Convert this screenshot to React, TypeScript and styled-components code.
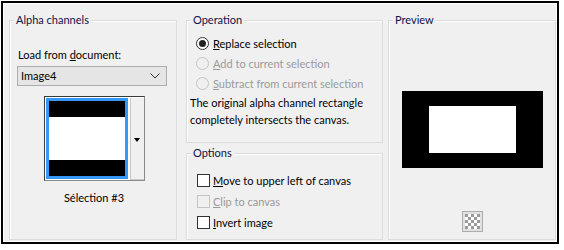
import React from "react"
import styled, { createGlobalStyle } from "styled-components"

const GlobalStyle = createGlobalStyle`
  body {
    margin: 0;
    background: #ffffff;
    font-family: Lato, "Liberation Sans", sans-serif;
    font-size: 11px;
    color: #000000;
  }
`

const Key = styled.span`
  text-decoration: underline;
  text-underline-offset: 1px;
`

// Groupbox with a title sitting on its top border
const GroupBox: React.FC<{ title: string; children?: React.ReactNode; className?: string }> = ({
  title,
  children,
  className,
}) => (
  <Group className={className}>
    <GroupTitle>{title}</GroupTitle>
    {children}
  </Group>
)

const RadioRow: React.FC<{ checked?: boolean; disabled?: boolean; children: React.ReactNode }> = ({
  checked,
  disabled,
  children,
}) => (
  <OptionRow $disabled={disabled} $height={20}>
    <Radio $disabled={disabled}>{checked && <RadioDot />}</Radio>
    <span>{children}</span>
  </OptionRow>
)

const CheckRow: React.FC<{ disabled?: boolean; children: React.ReactNode }> = ({ disabled, children }) => (
  <OptionRow $disabled={disabled} $height={21}>
    <CheckBox $disabled={disabled} />
    <span>{children}</span>
  </OptionRow>
)

export default function App() {
  return (
    <>
      <GlobalStyle />
      <Frame>
        <Panel>
          <LeftGroup title="Alpha channels">
            <LeftBody>
              <FieldLabel>
                Load from <Key>d</Key>ocument:
              </FieldLabel>
              <Combo>
                <span>Image4</span>
                <svg width="10" height="6" viewBox="0 0 10 6">
                  <polyline points="0.5,0.5 5,5 9.5,0.5" fill="none" stroke="#333" strokeWidth="1" />
                </svg>
              </Combo>
              <Thumb>
                <ThumbImage>
                  <Band $dark />
                  <Band />
                  <Band $dark />
                </ThumbImage>
                <ThumbButton>
                  <Triangle />
                </ThumbButton>
              </Thumb>
              <Caption>Sélection #3</Caption>
            </LeftBody>
          </LeftGroup>

          <MiddleColumn>
            <OperationGroup title="Operation">
              <OperationBody>
                <RadioRow checked>
                  <Key>R</Key>eplace selection
                </RadioRow>
                <RadioRow disabled>
                  <Key>A</Key>dd to current selection
                </RadioRow>
                <RadioRow disabled>
                  <Key>S</Key>ubtract from current selection
                </RadioRow>
                <Description>
                  The original alpha channel rectangle
                  <br />
                  completely intersects the canvas.
                </Description>
              </OperationBody>
            </OperationGroup>
            <OptionsGroup title="Options">
              <OptionsBody>
                <CheckRow>
                  <Key>M</Key>ove to upper left of canvas
                </CheckRow>
                <CheckRow disabled>
                  <Key>C</Key>lip to canvas
                </CheckRow>
                <CheckRow>
                  <Key>I</Key>nvert image
                </CheckRow>
              </OptionsBody>
            </OptionsGroup>
          </MiddleColumn>

          <PreviewGroup title="Preview">
            <PreviewBody>
              <PreviewCanvas>
                <PreviewHole />
              </PreviewCanvas>
              <CheckerButton>
                <svg width="15" height="15" viewBox="0 0 15 15">
                  <rect width="15" height="15" fill="#ffffff" />
                  {[0, 1, 2, 3, 4].map((r) =>
                    [0, 1, 2, 3, 4].map((c) =>
                      (r + c) % 2 === 0 ? (
                        <rect key={`${r}-${c}`} x={c * 3} y={r * 3} width="3" height="3" fill="#9a9a9a" />
                      ) : null
                    )
                  )}
                </svg>
              </CheckerButton>
            </PreviewBody>
          </PreviewGroup>
        </Panel>
      </Frame>
    </>
  )
}

const Frame = styled.div`
  margin: 1px 0 0 1px;
  width: 558px;
  height: 243px;
  box-sizing: border-box;
  border: 2px solid #000000;
  padding: 1px;
  background: #ffffff;
`

const Panel = styled.div`
  width: 100%;
  height: 100%;
  box-sizing: border-box;
  background: #f0f0f0;
  display: flex;
  align-items: stretch;
  padding: 16px 0 1px 5px;
`

const Group = styled.div`
  position: relative;
  box-sizing: border-box;
  border: 1px solid #dcdcdc;
  box-shadow: inset 1px 1px 0 #ffffff;
`

const GroupTitle = styled.div`
  position: absolute;
  top: -9px;
  left: 4px;
  padding: 0 2px;
  line-height: 16px;
  background: #f0f0f0;
  color: #10104a;
  white-space: nowrap;
`

const LeftGroup = styled(GroupBox)`
  width: 168px;
  margin-right: 9px;
`

const LeftBody = styled.div`
  display: flex;
  flex-direction: column;
  padding: 26px 0 0 7px;
`

const FieldLabel = styled.div`
  line-height: 16px;
  padding-left: 1px;
`

const Combo = styled.div`
  margin-top: 3px;
  width: 150px;
  height: 20px;
  box-sizing: border-box;
  border: 1px solid #adadad;
  background: #e5e5e5;
  display: flex;
  align-items: center;
  justify-content: space-between;
  padding: 0 6px 0 3px;
  line-height: 16px;
`

const Thumb = styled.div`
  align-self: center;
  margin: 10px 0 0 -5px;
  width: 101px;
  height: 85px;
  box-sizing: border-box;
  border: 1px solid #8a8a8a;
  border-top-color: #3a3a3a;
  border-left-color: #3a3a3a;
  background: #ffffff;
  display: flex;
  padding: 1px 0 0 1px;
`

const ThumbImage = styled.div`
  width: 82px;
  height: 81px;
  box-sizing: border-box;
  border: 3px solid #3797f7;
  display: flex;
  flex-direction: column;
`

const Band = styled.div<{ $dark?: boolean }>`
  flex: ${(p) => (p.$dark ? "0 0 16px" : "1")};
  background: ${(p) => (p.$dark ? "#000000" : "#ffffff")};
`

const ThumbButton = styled.div`
  margin-left: 2px;
  flex: 1;
  height: 82px;
  box-sizing: border-box;
  border-left: 1px solid #c8c8c8;
  border-bottom: 1px solid #c8c8c8;
  background: #f0f0f0;
  display: flex;
  align-items: center;
  justify-content: center;
`

const Triangle = styled.div`
  width: 0;
  height: 0;
  border-left: 3.5px solid transparent;
  border-right: 3.5px solid transparent;
  border-top: 4px solid #000000;
  margin-top: 2px;
`

const Caption = styled.div`
  align-self: center;
  margin: 9px 0 0 -5px;
  line-height: 16px;
`

const MiddleColumn = styled.div`
  width: 197px;
  margin-right: 5px;
  display: flex;
  flex-direction: column;
  gap: 10px;
`

const OperationGroup = styled(GroupBox)`
  height: 123px;
`

const OperationBody = styled.div`
  padding: 12px 0 0 9px;
`

const OptionRow = styled.div<{ $disabled?: boolean; $height: number }>`
  display: flex;
  align-items: center;
  height: ${(p) => p.$height}px;
  color: ${(p) => (p.$disabled ? "#9a9a9a" : "#000000")};
  white-space: nowrap;
`

const Radio = styled.div<{ $disabled?: boolean }>`
  width: 13px;
  height: 13px;
  box-sizing: border-box;
  border-radius: 50%;
  border: 1px solid ${(p) => (p.$disabled ? "#c4c4c4" : "#333333")};
  background: ${(p) => (p.$disabled ? "#f0f0f0" : "#ffffff")};
  display: flex;
  align-items: center;
  justify-content: center;
  margin-right: 4px;
  flex: none;
`

const RadioDot = styled.div`
  width: 7px;
  height: 7px;
  border-radius: 50%;
  background: #222222;
`

const Description = styled.div`
  margin: 0 0 0 -6px;
  padding-top: 1px;
  line-height: 17px;
  white-space: nowrap;
`

const OptionsGroup = styled(GroupBox)`
  flex: 1;
`

const OptionsBody = styled.div`
  padding: 16px 0 0 10px;
`

const CheckBox = styled.div<{ $disabled?: boolean }>`
  width: 13px;
  height: 13px;
  box-sizing: border-box;
  border: 1px solid ${(p) => (p.$disabled ? "#c4c4c4" : "#333333")};
  background: ${(p) => (p.$disabled ? "#f0f0f0" : "#ffffff")};
  margin-right: 3px;
  flex: none;
`

const PreviewGroup = styled(GroupBox)`
  width: 168px;
`

const PreviewBody = styled.div`
  display: flex;
  flex-direction: column;
  align-items: center;
  padding: 70px 0 0 1px;
`

const PreviewCanvas = styled.div`
  width: 141px;
  height: 77px;
  background: #000000;
  display: flex;
  align-items: center;
  justify-content: center;
`

const PreviewHole = styled.div`
  width: 87px;
  height: 47px;
  background: #ffffff;
`

const CheckerButton = styled.div`
  margin-top: 43px;
  width: 21px;
  height: 21px;
  box-sizing: border-box;
  border: 1px solid #adadad;
  background: #e1e1e1;
  display: flex;
  align-items: center;
  justify-content: center;
`
